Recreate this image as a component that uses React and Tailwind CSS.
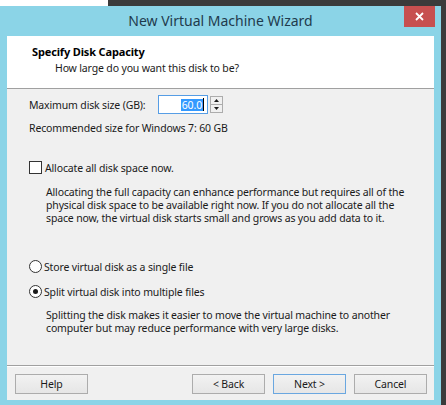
import React from "react";

const Button = ({ label, primary }) => (
  <button
    className={`w-[73px] h-[20px] border text-[10.5px] leading-[12px] text-[#1a1a1a] bg-gradient-to-b from-[#f2f2f2] to-[#e6e6e6] ${
      primary ? "border-[#6aa7e0]" : "border-[#acacac]"
    }`}
  >
    {label}
  </button>
);

const Radio = ({ checked, label }) => (
  <div className="flex items-center h-[13px] gap-[2px]">
    <div className="w-[13px] h-[13px] rounded-full border border-[#333] bg-white flex items-center justify-center">
      {checked && <div className="w-[5px] h-[5px] rounded-full bg-[#1a1a1a]" />}
    </div>
    <span>{label}</span>
  </div>
);

export default function App() {
  return (
    <div className="w-[446px] h-[405px] flex flex-col bg-[#3b3b3b] overflow-hidden font-['Noto_Sans',sans-serif] text-[10.5px] leading-[12px] tracking-[-0.15px] text-[#1a1a1a]">
      <div className="h-[6px] flex shrink-0">
        <div className="w-[108px] bg-white" />
        <div className="flex-1 bg-[#3b3b3b]" />
      </div>

      <div className="flex flex-1 min-h-0">
        <div className="w-[441px] bg-[#8bd4e7] flex flex-col px-[7px] pb-[5px]">
          {/* title bar */}
          <div className="h-[30px] relative flex items-center justify-center shrink-0">
            <span className="text-[14px] leading-[18px] tracking-normal text-[#1f3b4d]">
              New Virtual Machine Wizard
            </span>
            <div className="absolute top-0 right-[-1px] w-[31px] h-[21px] bg-[#c75050] flex items-center justify-center">
              <svg width="9" height="9" viewBox="0 0 9 9">
                <path d="M1 1 L8 8 M8 1 L1 8" stroke="white" strokeWidth="1.8" />
              </svg>
            </div>
          </div>

          {/* client area */}
          <div className="flex-1 bg-[#f0f0f0] flex flex-col">
            <div className="h-[53px] bg-white border-b border-[#a0a0a0] pt-[8px] shrink-0">
              <div className="pl-[25px] font-bold leading-[16px] text-[11px] text-black">
                Specify Disk Capacity
              </div>
              <div className="pl-[48px] leading-[16px]">
                How large do you want this disk to be?
              </div>
            </div>

            <div className="flex-1 flex flex-col pl-[22px]">
              <div className="flex items-center mt-[6px] h-[19px]">
                <span className="w-[129px]">Maximum disk size (GB):</span>
                <div className="w-[50px] h-[19px] border border-[#569de5] bg-white flex items-center justify-end pr-[3px]">
                  <span className="bg-[#3399ff] text-white px-[1px]">60.0</span>
                  <div className="w-px h-[13px] bg-black" />
                </div>
                <div className="ml-[2px] w-[13px] h-[17px] flex flex-col">
                  <div className="flex-1 border border-[#acacac] bg-[#f0f0f0] flex items-center justify-center">
                    <svg width="5" height="3" viewBox="0 0 5 3">
                      <path d="M2.5 0 L5 3 L0 3 Z" fill="#1a1a1a" />
                    </svg>
                  </div>
                  <div className="flex-1 border border-t-0 border-[#acacac] bg-[#f0f0f0] flex items-center justify-center">
                    <svg width="5" height="3" viewBox="0 0 5 3">
                      <path d="M0 0 L5 0 L2.5 3 Z" fill="#1a1a1a" />
                    </svg>
                  </div>
                </div>
              </div>

              <div className="mt-[7px] leading-[14px]">
                Recommended size for Windows 7: 60 GB
              </div>

              <div className="flex items-center h-[13px] mt-[26px] gap-[3px]">
                <div className="w-[13px] h-[13px] border border-[#333] bg-white" />
                <span>Allocate all disk space now.</span>
              </div>

              <div className="ml-[17px] mt-[12px] whitespace-nowrap leading-[13px]">
                Allocating the full capacity can enhance performance but requires all of the
                <br />
                physical disk space to be available right now. If you do not allocate all the
                <br />
                space now, the virtual disk starts small and grows as you add data to it.
              </div>

              <div className="mt-[35px]">
                <Radio label="Store virtual disk as a single file" />
              </div>
              <div className="mt-[12px]">
                <Radio checked label="Split virtual disk into multiple files" />
              </div>

              <div className="ml-[17px] mt-[11px] whitespace-nowrap leading-[13px]">
                Splitting the disk makes it easier to move the virtual machine to another
                <br />
                computer but may reduce performance with very large disks.
              </div>
            </div>

            <div className="border-t border-[#a0a0a0] shadow-[inset_0_1px_0_#ffffff] h-[35px] pt-[8px] pl-[8px] pr-[7px] flex shrink-0">
              <Button label="Help" />
              <div className="flex-1" />
              <div className="flex gap-[8px]">
                <Button label="< Back" />
                <Button label="Next >" primary />
                <Button label="Cancel" />
              </div>
            </div>
          </div>
        </div>
        <div className="flex-1 bg-[#3b3b3b]" />
      </div>
    </div>
  );
}
